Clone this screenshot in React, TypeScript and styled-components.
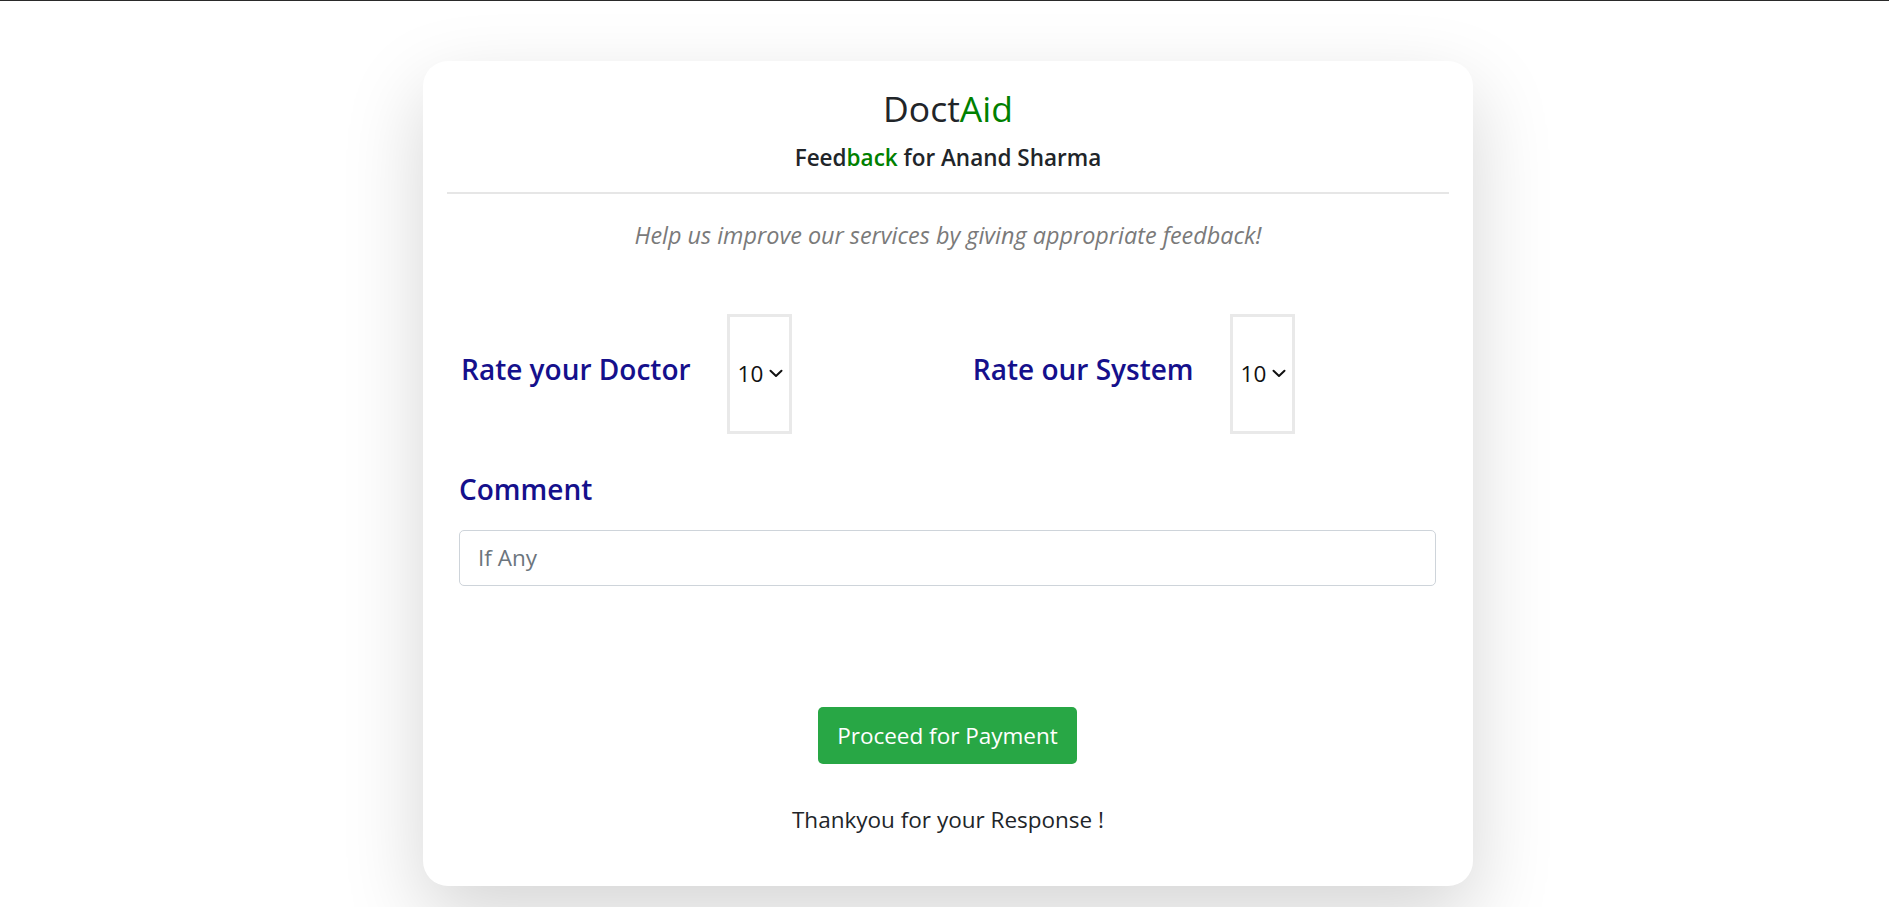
import React from "react";
import styled, { createGlobalStyle } from "styled-components";

const GlobalStyle = createGlobalStyle`
  html, body { margin: 0; padding: 0; background: #ffffff; }
  body {
    border-top: 1px solid #2a2a2a;
    font-family: "Open Sans", "Noto Sans", "Liberation Sans", sans-serif;
    color: #212529;
  }
  *, *::before, *::after { box-sizing: border-box; }
`;

const Page = styled.div`
  display: flex;
  justify-content: center;
  padding: 60px 0 40px 7px;
`;

const Card = styled.div`
  width: 1050px;
  background: #ffffff;
  border-radius: 25px;
  box-shadow: 0 30px 80px rgba(0, 0, 0, 0.17);
  padding: 25px 0 51px;
  display: flex;
  flex-direction: column;
`;

const Brand = styled.h1`
  margin: 0;
  text-align: center;
  font-size: 35.5px;
  font-weight: 500;
  line-height: 44px;
  color: #212529;
`;

const Green = styled.span`
  color: #008000;
`;

const Subtitle = styled.h2`
  margin: 13px 0 0;
  text-align: center;
  font-size: 22.5px;
  font-weight: 600;
  line-height: 30px;
  color: #212529;
`;

const Divider = styled.hr`
  margin: 18.7px 24px 0;
  border: 0;
  border-top: 2px solid #e6e6e6;
  height: 0;
`;

const Tagline = styled.p`
  margin: 26px 0 0;
  text-align: center;
  font-size: 23.4px;
  font-style: italic;
  line-height: 30px;
  color: #7a7a7a;
`;

const Form = styled.form`
  display: flex;
  flex-direction: column;
  padding: 0 37px 0 36px;
`;

const RatingRow = styled.div`
  margin-top: 64px;
  display: grid;
  grid-template-columns: 511.8px 1fr;
  padding-left: 2px;
`;

const RatingGroup = styled.div`
  display: flex;
  align-items: center;
  gap: 36px;
`;

const FieldLabel = styled.label`
  display: block;
  margin: 0 0 10px;
  font-size: 28px;
  font-weight: 600;
  line-height: 38px;
  color: #15108c;
`;

const CommentLabel = styled(FieldLabel)`
  margin: 36px 0 0;
`;

const SelectBox = styled.div`
  width: 65px;
  height: 120px;
  border: 3px solid #e9e9e9;
  display: flex;
  align-items: center;
  gap: 5px;
  padding-left: 8px;
`;

const Select = styled.select`
  appearance: none;
  -webkit-appearance: none;
  border: 0;
  background: transparent;
  padding: 0;
  margin: 0;
  font-family: inherit;
  font-size: 22.5px;
  color: #111111;
  outline: none;
`;

const Chevron = styled.svg`
  flex: none;
  margin-top: -1px;
  pointer-events: none;
`;

const CommentInput = styled.input`
  margin-top: 22px;
  width: 100%;
  height: 56px;
  border: 1px solid #ced4da;
  border-radius: 5px;
  padding: 0 18px;
  font-family: inherit;
  font-size: 22.5px;
  color: #495057;
  outline: none;
  &::placeholder {
    color: #6c757d;
  }
`;

const ButtonRow = styled.div`
  margin-top: 121px;
  display: flex;
  justify-content: center;
`;

const PayButton = styled.button`
  height: 57px;
  padding: 0 19.5px;
  border: 0;
  border-radius: 5px;
  background: #28a745;
  color: #ffffff;
  font-family: inherit;
  font-size: 22.5px;
  line-height: 31px;
  cursor: pointer;
`;

const Thanks = styled.p`
  margin: 41px 0 0;
  text-align: center;
  font-size: 22.5px;
  line-height: 30px;
  color: #212529;
`;

const options = Array.from({ length: 10 }, (_, i) => i + 1);

function Rating({ label, id }: { label: string; id: string }) {
  return (
    <RatingGroup>
      <FieldLabel htmlFor={id}>{label}</FieldLabel>
      <SelectBox>
        <Select id={id} defaultValue={10}>
          {options.map((n) => (
            <option key={n} value={n}>
              {n}
            </option>
          ))}
        </Select>
        <Chevron width="14" height="9" viewBox="0 0 14 9" fill="none">
          <path d="M1.5 1.8 L7 7 L12.5 1.8" stroke="#111" strokeWidth="2" strokeLinecap="round" strokeLinejoin="round" />
        </Chevron>
      </SelectBox>
    </RatingGroup>
  );
}

export default function App() {
  return (
    <>
      <GlobalStyle />
      <Page>
        <Card>
          <Brand>
            Doct<Green>Aid</Green>
          </Brand>
          <Subtitle>
            Feed<Green>back</Green> for Anand Sharma
          </Subtitle>
          <Divider />
          <Tagline>Help us improve our services by giving appropriate feedback!</Tagline>
          <Form onSubmit={(e) => e.preventDefault()}>
            <RatingRow>
              <Rating label="Rate your Doctor" id="doctor" />
              <Rating label="Rate our System" id="system" />
            </RatingRow>
            <CommentLabel htmlFor="comment">Comment</CommentLabel>
            <CommentInput id="comment" placeholder="If Any" />
            <ButtonRow>
              <PayButton type="submit">Proceed for Payment</PayButton>
            </ButtonRow>
          </Form>
          <Thanks>Thankyou for your Response !</Thanks>
        </Card>
      </Page>
    </>
  );
}
